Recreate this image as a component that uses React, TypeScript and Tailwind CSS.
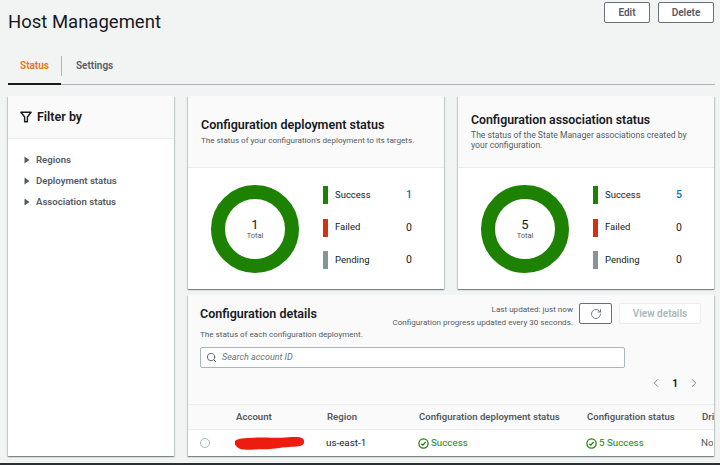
import { ChevronLeft, ChevronRight, RotateCw, Search } from 'lucide-react';

const font = "[font-family:Roboto,sans-serif]";

const cardShadow = 'shadow-[0_1px_1px_rgba(0,28,36,0.3),1px_1px_1px_rgba(0,28,36,0.15),-1px_1px_1px_rgba(0,28,36,0.15)]';

const legendColors: Record<string, string> = {
  Success: 'bg-[#1d8102]',
  Failed: 'bg-[#d13212]',
  Pending: 'bg-[#879596]',
};

const FilterIcon = () => (
  <svg width="12" height="12" viewBox="0 0 14 14" fill="none" stroke="#16191f" strokeWidth="1.6">
    <path d="M1 1.5h12L8.6 7v5.500H5.400V7z" strokeLinejoin="round" />
  </svg>
);

const Caret = () => (
  <svg width="6" height="8" viewBox="0 0 6 8" className="shrink-0">
    <path d="M0.5 0.5L5.500 4L0.5 7.500z" fill="#545b64" />
  </svg>
);

const CheckIcon = () => (
  <svg width="11" height="11" viewBox="0 0 12 12" fill="none" stroke="#1d8102" strokeWidth="1.4" className="shrink-0">
    <circle cx="6" cy="6" r="5" />
    <path d="M3.600 6.200l1.700 1.600 3-3.400" />
  </svg>
);

const Donut = ({ total }: { total: number }) => (
  <div className="w-[88px] h-[88px] rounded-full border-[14px] border-[#1d8102] bg-white flex flex-col items-center justify-center shrink-0">
    <span className="text-[13px] leading-[13px] text-[#16191f]">{total}</span>
    <span className="text-[7.500px] leading-[9px] text-[#545b64]">Total</span>
  </div>
);

const StatusChart = ({ total }: { total: number }) => (
  <div className="flex-1 bg-white flex items-center pl-[23px]">
    <Donut total={total} />
    <div className="ml-6 flex flex-col gap-[14.5px] w-[89px] -mt-[2px]">
      {['Success', 'Failed', 'Pending'].map((name) => (
        <div key={name} className="flex items-center h-[18px]">
          <span className={`w-[5px] h-[18px] ${legendColors[name]}`} />
          <span className="ml-[7px] text-[9.500px] text-[#16191f]">{name}</span>
          <span className={`ml-auto text-[10.500px] ${name === 'Success' ? 'text-[#0073bb] font-medium' : 'text-[#16191f]'}`}>
            {name === 'Success' ? total : 0}
          </span>
        </div>
      ))}
    </div>
  </div>
);

const cellHead = 'text-[9.600px] font-semibold text-[#545b64]';

export default function App() {
  return (
    <div className={`w-[720px] h-[465px] overflow-hidden bg-[#f2f3f3] relative ${font}`}>
      <div className="pl-2 pr-[6px] flex justify-between h-[50px]">
        <h1 className="text-[18.500px] leading-[28px] mt-[8px] text-[#16191f]">Host Management</h1>
        <div className="flex gap-2 mt-[2px] h-[21px]">
          <button className="w-[46px] border border-[#687078] rounded-[2px] bg-white text-[10px] font-semibold text-[#545b64]">Edit</button>
          <button className="w-[56px] border border-[#687078] rounded-[2px] bg-white text-[10px] font-semibold text-[#545b64]">Delete</button>
        </div>
      </div>

      <div className="ml-2 mr-[5px] h-[35px] border-b border-[#aab7b8] flex">
        <div className="w-[53px] flex items-center justify-center border-b-2 border-[#16191f] h-[35px] pb-[3px] text-[10px] font-semibold text-[#ec7211]">Status</div>
        <div className="w-px h-[20px] mt-[6px] bg-[#aab7b8]" />
        <div className="pl-[14px] flex items-center pb-[3px] text-[10px] font-semibold text-[#545b64]">Settings</div>
      </div>

      <div className="flex gap-[14px] ml-2 mr-[6px] mt-[11px] h-[360px]">
        <aside className={`w-[166px] bg-white shrink-0 ${cardShadow}`}>
          <div className="h-[43px] bg-[#fafafa] border-b border-[#eaeded] flex items-center pl-[12px] gap-[5px]">
            <FilterIcon />
            <span className="text-[12.500px] font-semibold text-[#16191f]">Filter by</span>
          </div>
          <div className="pl-4 pt-[14px] flex flex-col gap-[7px]">
            {['Regions', 'Deployment status', 'Association status'].map((label) => (
              <div key={label} className="flex items-center gap-[6px] h-[14px] text-[9.600px] font-semibold text-[#545b64]">
                <Caret />
                {label}
              </div>
            ))}
          </div>
        </aside>

        <div className="flex-1 min-w-0 flex flex-col gap-[6px]">
          <div className="flex gap-[14px] h-[193px]">
            <section className={`w-[256px] flex flex-col ${cardShadow}`}>
              <div className="h-[72px] bg-[#fafafa] border-b border-[#eaeded] px-[13px] pt-[21px] shrink-0">
                <h2 className="text-[12.500px] leading-[16px] font-semibold text-[#16191f]">Configuration deployment status</h2>
                <p className="text-[8.100px] leading-[12px] mt-[1px] text-[#545b64] whitespace-nowrap">The status of your configuration's deployment to its targets.</p>
              </div>
              <StatusChart total={1} />
            </section>
            <section className={`w-[256px] flex flex-col ${cardShadow}`}>
              <div className="h-[72px] bg-[#fafafa] border-b border-[#eaeded] px-[13px] pt-[16px] shrink-0">
                <h2 className="text-[12.300px] leading-[16px] font-semibold text-[#16191f]">Configuration association status</h2>
                <p className="text-[8.600px] leading-[10px] mt-[2px] text-[#545b64]">The status of the State Manager associations created by your configuration.</p>
              </div>
              <StatusChart total={5} />
            </section>
          </div>

          <section className={`h-[161px] bg-white flex flex-col overflow-hidden ${cardShadow}`}>
            <div className="h-[109px] bg-[#fafafa] pl-[12px] pr-[13px] shrink-0">
              <div className="flex justify-between pt-[8px] h-[52px]">
                <div>
                  <h2 className="text-[12.500px] leading-[16px] mt-[3px] font-semibold text-[#16191f]">Configuration details</h2>
                  <p className="text-[8.100px] leading-[12px] mt-[6px] text-[#545b64] whitespace-nowrap">The status of each configuration deployment.</p>
                </div>
                <div className="flex items-start">
                  <div className="text-[8.100px] leading-[13px] text-[#545b64] text-right mr-[6px] whitespace-nowrap">
                    <div>Last updated: just now</div>
                    <div>Configuration progress updated every 30 seconds.</div>
                  </div>
                  <button className="w-[33px] h-[21px] border border-[#687078] rounded-[2px] bg-white flex items-center justify-center">
                    <RotateCw size={12} strokeWidth={1.6} color="#545b64" />
                  </button>
                  <button className="w-[82px] h-[21px] ml-[7px] border border-[#eaeded] rounded-[2px] bg-white text-[10px] font-semibold text-[#aab7b8]">View details</button>
                </div>
              </div>
              <div className="w-[425px] h-[21px] border border-[#aab7b8] rounded-[2px] bg-white flex items-center pl-[5px] gap-[5px]">
                <Search size={11} strokeWidth={2} color="#545b64" />
                <span className="text-[9px] italic text-[#687078]">Search account ID</span>
              </div>
              <div className="flex justify-end items-center gap-[9px] mt-[8px] h-[14px]">
                <ChevronLeft size={14} strokeWidth={1.4} color="#687078" />
                <span className="text-[10px] font-bold text-[#16191f]">1</span>
                <ChevronRight size={14} strokeWidth={1.4} color="#687078" />
              </div>
            </div>

            <div className="h-[26px] bg-[#fafafa] border-t border-b border-[#eaeded] flex items-center shrink-0 whitespace-nowrap">
              <span className={`${cellHead} ml-[48px] w-[91px]`}>Account</span>
              <span className={`${cellHead} w-[92px]`}>Region</span>
              <span className={`${cellHead} w-[168px]`}>Configuration deployment status</span>
              <span className={`${cellHead} w-[115px]`}>Configuration status</span>
              <span className={`${cellHead} w-[12px] overflow-hidden`}>Dri</span>
            </div>
            <div className="flex-1 bg-white flex items-center whitespace-nowrap text-[9.800px]">
              <span className="ml-[12px] w-[10px] h-[10px] rounded-full border border-[#aab7b8] shrink-0" />
              <span className="w-[25px] shrink-0" />
              <svg width="69" height="13" viewBox="0 0 69 13" className="shrink-0">
                <path d="M1 3C6 0.500 14 1 24 0.500S40 1.500 50 0.500S67 -0.500 68.500 2.500S69 8 65 9S54 9.500 44 11S30 12 20 12.500S5 13 2 10S-1 5 1 3z" fill="#ee1c0e" />
              </svg>
              <span className="w-[22px] shrink-0" />
              <span className="w-[92px] shrink-0 text-[#16191f]">us-east-1</span>
              <span className="w-[168px] shrink-0 flex items-center gap-[2px] text-[#1d8102]"><CheckIcon />Success</span>
              <span className="w-[115px] shrink-0 flex items-center gap-[2px] text-[#1d8102]"><CheckIcon />5 Success</span>
              <span className="w-[12px] overflow-hidden text-[#545b64]">Non</span>
            </div>
          </section>
        </div>
      </div>

      <div className="absolute left-0 right-0 bottom-0 h-[2px] bg-[#2b3036]" />
    </div>
  );
}
